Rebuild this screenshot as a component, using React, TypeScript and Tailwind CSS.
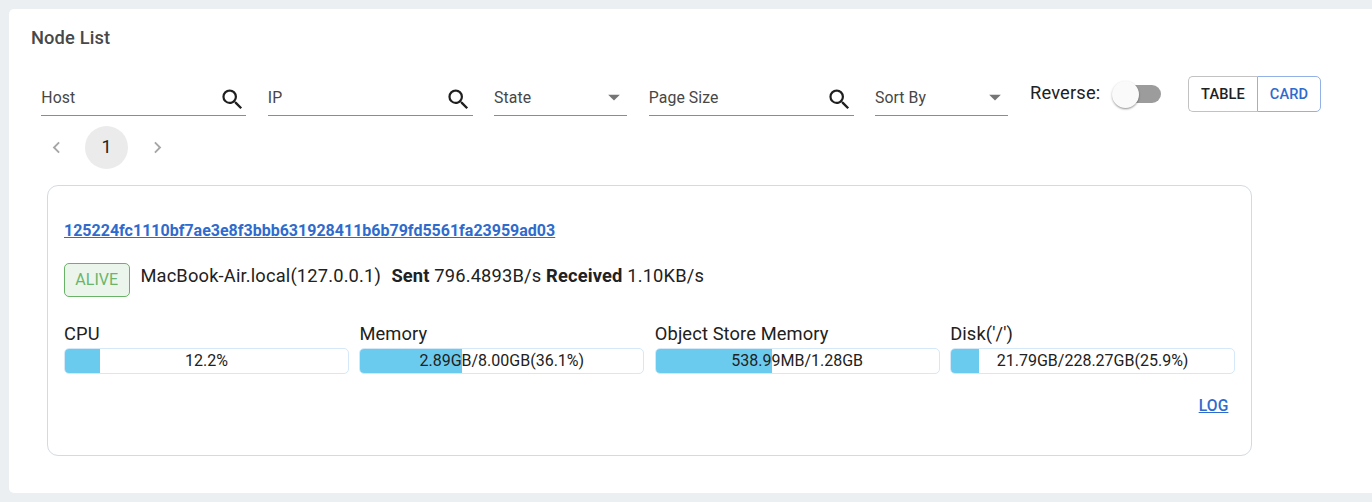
import { MdArrowDropDown, MdNavigateBefore, MdNavigateNext, MdSearch } from "react-icons/md";

function SearchField({ label }: { label: string }) {
  return (
    <div className="flex h-8 w-[205px] items-start justify-between border-b border-[#8c8c8c]">
      <span className="mt-1 pl-[0.3px] text-[15.8px] leading-5 tracking-[0.08px] text-[#474747]">{label}</span>
      <MdSearch className="mt-[2px] mr-[0.4px] size-[27px] text-[#1f1f1f]" />
    </div>
  );
}

function SelectField({ label }: { label: string }) {
  return (
    <div className="flex h-8 w-[133px] items-start justify-between border-b border-[#8c8c8c]">
      <span className="mt-1 text-[15.8px] leading-5 tracking-[0.08px] text-[#474747]">{label}</span>
      <MdArrowDropDown className="-mt-px -mr-px size-[28px] text-[#757575]" />
    </div>
  );
}

const usages = [
  { name: "CPU", text: "12.2%", percent: 12.2 },
  { name: "Memory", text: "2.89GB/8.00GB(36.1%)", percent: 36.1 },
  { name: "Object Store Memory", text: "538.99MB/1.28GB", percent: 41.1 },
  { name: "Disk('/')", text: "21.79GB/228.27GB(25.9%)", percent: 9.9 },
];

export default function App() {
  return (
    <div className="h-[502px] w-[1372px] overflow-hidden bg-[#ebeff2] pt-[9px] pl-[9px] font-[Roboto,sans-serif] text-[#212121]">
      <main className="h-[484px] rounded-l-[5px] bg-white pt-[17px] pl-[22px]">
        <h1 className="h-6 text-[18.3px] leading-6 font-medium tracking-[0.14px] text-[#484848]">Node List</h1>

        <div className="mt-[26px] ml-[10px] flex h-10 items-start">
          <div className="mt-2 flex gap-[21.5px]">
            <SearchField label="Host" />
            <SearchField label="IP" />
            <SelectField label="State" />
            <SearchField label="Page Size" />
            <SelectField label="Sort By" />
          </div>
          <span className="mt-[5px] ml-[22px] w-[82px] text-[18.3px] leading-6 tracking-[0.17px]">Reverse:</span>
          <div className="mt-[9px] flex h-[18px] w-[49px] items-center rounded-full bg-gradient-to-r from-white from-25% to-[#9c9c9c] to-25%">
            <span className="size-[27px] shrink-0 rounded-full bg-[#fafafa] shadow-[0_2px_2px_-1px_rgba(0,0,0,0.2),0_1px_2px_rgba(0,0,0,0.18),0_1px_3px_rgba(0,0,0,0.12)]" />
          </div>
          <div className="ml-[27px] flex h-9 text-[14.6px] font-medium tracking-[0.12px]">
            <button className="w-[69px] rounded-l-[5px] border border-r-0 border-[#c2c2c2] pt-[2px]">TABLE</button>
            <button className="w-16 rounded-r-[5px] border border-[#93b1e6] pt-[2px] text-[#2f6bcc]">CARD</button>
          </div>
        </div>

        <nav className="mt-[10px] ml-[14px] flex h-[43px] items-center text-[#a6a6a6]">
          <MdNavigateBefore className="size-[23px]" />
          <span className="mr-[18px] ml-[17px] flex size-[43px] items-center justify-center rounded-full bg-[#ebebeb] pb-[2px] text-[18px] text-[#212121]">1</span>
          <MdNavigateNext className="size-[23px]" />
        </nav>

        <section className="mt-4 ml-4 h-[271px] w-[1205px] rounded-[11px] border border-[#d2dbe4] px-4 pt-[35px]">
          <a href="#" className="block h-5 text-[16px] leading-5 font-bold text-[#2f6bcc] underline">
            125224fc1110bf7ae3e8f3bbb631928411b6b79fd5561fa23959ad03
          </a>
          <div className="mt-[22px] flex h-[34px] items-start text-[18.3px] leading-6 tracking-[0.17px]">
            <span className="mr-[10.4px] flex h-[34px] w-[66px] items-center justify-center rounded-[5px] border border-[#69b369] bg-[#ecf5ec] pr-[0.6px] text-[16px] tracking-normal text-[#6ab56a]">ALIVE</span>
            <span className="mt-px w-[251px] whitespace-nowrap">MacBook-Air.local(127.0.0.1)</span>
            <span className="mt-px whitespace-nowrap"><b>Sent</b> 796.4893B/s <b>Received</b> 1.10KB/s</span>
          </div>
          <div className="mt-[25px] grid grid-cols-4 gap-[10.6px]">
            {usages.map((item) => (
              <div key={item.name}>
                <div className="h-[26px] text-[18.3px] leading-6 tracking-[0.12px]">{item.name}</div>
                <div className="grid h-[26px] overflow-hidden rounded-[5px] border border-[#d4e8f8]">
                  <div className="col-start-1 row-start-1 bg-[#6bcbef]" style={{ width: `${item.percent}%` }} />
                  <span className="col-start-1 row-start-1 text-center text-[16px] leading-[23px]">{item.text}</span>
                </div>
              </div>
            ))}
          </div>
          <div className="mt-[22px] flex justify-end pr-[6.6px]">
            <a href="#" className="text-[15.6px] leading-5 font-medium tracking-[0.15px] text-[#2f6bcc] underline">LOG</a>
          </div>
        </section>
      </main>
    </div>
  );
}
